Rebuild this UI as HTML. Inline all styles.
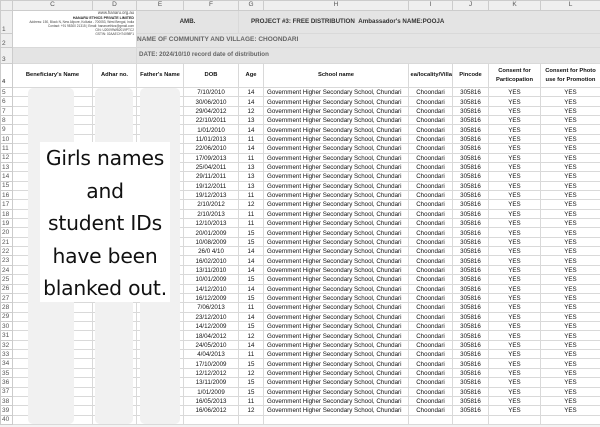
<!DOCTYPE html>
<html><head><meta charset="utf-8"><style>
*{margin:0;padding:0;box-sizing:border-box}
body{width:600px;height:427px;overflow:hidden;background:#f3f3f3;font-family:"Liberation Sans",Arial,sans-serif;position:relative}
table{position:absolute;left:0;top:0;border-collapse:collapse;table-layout:fixed;width:600px}
td{border:1px solid #d9d9d9;font-size:6.2px;color:#111;text-align:center;white-space:nowrap;overflow:hidden;padding:0;line-height:1;vertical-align:bottom}
tr.d td{height:9.37px;background:#fff}
td.n{background:#efefef;color:#555;text-align:left;padding-left:1px;font-size:6.5px;border-color:#ccc}
tr.h td{height:10px;background:#efefef;color:#555;font-size:6.5px;vertical-align:middle;border-color:#ccc}
td.g{background:#e4e4e4;font-weight:bold;color:#333}
td.s{text-align:left;padding-left:3px}
.hd td{font-weight:bold;font-size:5.8px;vertical-align:middle;background:#fff;line-height:1.5}
.blk{position:absolute;background:#f1f1f1;border-radius:5px;top:88px;height:336px}
.ov{position:absolute;left:40px;top:142px;width:130px;height:160px;background:#fff;font-family:"DejaVu Sans",sans-serif;font-size:20.3px;text-align:center;line-height:32.6px;color:#111;letter-spacing:-0.2px}
.logo{position:absolute;left:13px;top:11px;width:123px;height:23px;background:#fff;font-size:3.2px;text-align:right;line-height:3.9px;color:#444;padding-right:2px}
</style></head><body>
<table>
<colgroup><col style="width:12px"><col style="width:80px"><col style="width:44px"><col style="width:47px"><col style="width:55px"><col style="width:25px"><col style="width:145px"><col style="width:44px"><col style="width:36px"><col style="width:52px"><col style="width:60px"></colgroup>
<tr class="h"><td></td><td>C</td><td>D</td><td>E</td><td>F</td><td>G</td><td>H</td><td>I</td><td>J</td><td>K</td><td>L</td></tr>
<tr style="height:23px"><td class="n">1</td><td class="g" colspan="2" style="background:#fff"></td><td class="g" colspan="2" style="vertical-align:middle">AMB.</td><td class="g" colspan="6" style="text-align:left;vertical-align:middle;padding-left:12px">PROJECT #3: FREE DISTRIBUTION &nbsp;Ambassador's NAME:POOJA</td></tr>
<tr style="height:14px"><td class="n">2</td><td class="g" colspan="2" style="background:#fff"></td><td class="g" colspan="8" style="text-align:left;vertical-align:middle;font-size:6.5px;color:#666">NAME OF COMMUNITY AND VILLAGE: CHOONDARI</td></tr>
<tr style="height:16px"><td class="n">3</td><td class="g" colspan="2"></td><td class="g" colspan="8" style="text-align:left;vertical-align:middle;font-size:6.2px;color:#666;padding-left:2px">DATE: 2024/10/10 record date of distribution</td></tr>
<tr class="hd" style="height:24px"><td class="n" style="vertical-align:bottom">4</td><td>Beneficiary's Name</td><td>Adhar no.</td><td>Father's Name</td><td>DOB</td><td>Age</td><td>School name</td><td style="text-align:right">ea/locality/Villa</td><td>Pincode</td><td>Consent for<br>Particopation</td><td>Consent for Photo<br>use for Promotion</td></tr>
<tr class="d"><td class="n">5</td><td></td><td></td><td></td><td>7/10/2010</td><td>14</td><td class="s">Government Higher Secondary School, Chundari</td><td>Choondari</td><td>305816</td><td>YES</td><td>YES</td></tr>
<tr class="d"><td class="n">6</td><td></td><td></td><td></td><td>30/06/2010</td><td>14</td><td class="s">Government Higher Secondary School, Chundari</td><td>Choondari</td><td>305816</td><td>YES</td><td>YES</td></tr>
<tr class="d"><td class="n">7</td><td></td><td></td><td></td><td>29/04/2012</td><td>12</td><td class="s">Government Higher Secondary School, Chundari</td><td>Choondari</td><td>305816</td><td>YES</td><td>YES</td></tr>
<tr class="d"><td class="n">8</td><td></td><td></td><td></td><td>22/10/2011</td><td>13</td><td class="s">Government Higher Secondary School, Chundari</td><td>Choondari</td><td>305816</td><td>YES</td><td>YES</td></tr>
<tr class="d"><td class="n">9</td><td></td><td></td><td></td><td>1/01/2010</td><td>14</td><td class="s">Government Higher Secondary School, Chundari</td><td>Choondari</td><td>305816</td><td>YES</td><td>YES</td></tr>
<tr class="d"><td class="n">10</td><td></td><td></td><td></td><td>11/01/2013</td><td>11</td><td class="s">Government Higher Secondary School, Chundari</td><td>Choondari</td><td>305816</td><td>YES</td><td>YES</td></tr>
<tr class="d"><td class="n">11</td><td></td><td></td><td></td><td>22/06/2010</td><td>14</td><td class="s">Government Higher Secondary School, Chundari</td><td>Choondari</td><td>305816</td><td>YES</td><td>YES</td></tr>
<tr class="d"><td class="n">12</td><td></td><td></td><td></td><td>17/09/2013</td><td>11</td><td class="s">Government Higher Secondary School, Chundari</td><td>Choondari</td><td>305816</td><td>YES</td><td>YES</td></tr>
<tr class="d"><td class="n">13</td><td></td><td></td><td></td><td>25/04/2011</td><td>13</td><td class="s">Government Higher Secondary School, Chundari</td><td>Choondari</td><td>305816</td><td>YES</td><td>YES</td></tr>
<tr class="d"><td class="n">14</td><td></td><td></td><td></td><td>29/11/2011</td><td>13</td><td class="s">Government Higher Secondary School, Chundari</td><td>Choondari</td><td>305816</td><td>YES</td><td>YES</td></tr>
<tr class="d"><td class="n">15</td><td></td><td></td><td></td><td>19/12/2011</td><td>13</td><td class="s">Government Higher Secondary School, Chundari</td><td>Choondari</td><td>305816</td><td>YES</td><td>YES</td></tr>
<tr class="d"><td class="n">16</td><td></td><td></td><td></td><td>19/12/2013</td><td>11</td><td class="s">Government Higher Secondary School, Chundari</td><td>Choondari</td><td>305816</td><td>YES</td><td>YES</td></tr>
<tr class="d"><td class="n">17</td><td></td><td></td><td></td><td>2/10/2012</td><td>12</td><td class="s">Government Higher Secondary School, Chundari</td><td>Choondari</td><td>305816</td><td>YES</td><td>YES</td></tr>
<tr class="d"><td class="n">18</td><td></td><td></td><td></td><td>2/10/2013</td><td>11</td><td class="s">Government Higher Secondary School, Chundari</td><td>Choondari</td><td>305816</td><td>YES</td><td>YES</td></tr>
<tr class="d"><td class="n">19</td><td></td><td></td><td></td><td>12/10/2013</td><td>11</td><td class="s">Government Higher Secondary School, Chundari</td><td>Choondari</td><td>305816</td><td>YES</td><td>YES</td></tr>
<tr class="d"><td class="n">20</td><td></td><td></td><td></td><td>20/01/2009</td><td>15</td><td class="s">Government Higher Secondary School, Chundari</td><td>Choondari</td><td>305816</td><td>YES</td><td>YES</td></tr>
<tr class="d"><td class="n">21</td><td></td><td></td><td></td><td>10/08/2009</td><td>15</td><td class="s">Government Higher Secondary School, Chundari</td><td>Choondari</td><td>305816</td><td>YES</td><td>YES</td></tr>
<tr class="d"><td class="n">22</td><td></td><td></td><td></td><td>26/0 4/10</td><td>14</td><td class="s">Government Higher Secondary School, Chundari</td><td>Choondari</td><td>305816</td><td>YES</td><td>YES</td></tr>
<tr class="d"><td class="n">23</td><td></td><td></td><td></td><td>16/02/2010</td><td>14</td><td class="s">Government Higher Secondary School, Chundari</td><td>Choondari</td><td>305816</td><td>YES</td><td>YES</td></tr>
<tr class="d"><td class="n">24</td><td></td><td></td><td></td><td>13/11/2010</td><td>14</td><td class="s">Government Higher Secondary School, Chundari</td><td>Choondari</td><td>305816</td><td>YES</td><td>YES</td></tr>
<tr class="d"><td class="n">25</td><td></td><td></td><td></td><td>10/01/2009</td><td>15</td><td class="s">Government Higher Secondary School, Chundari</td><td>Choondari</td><td>305816</td><td>YES</td><td>YES</td></tr>
<tr class="d"><td class="n">26</td><td></td><td></td><td></td><td>14/12/2010</td><td>14</td><td class="s">Government Higher Secondary School, Chundari</td><td>Choondari</td><td>305816</td><td>YES</td><td>YES</td></tr>
<tr class="d"><td class="n">27</td><td></td><td></td><td></td><td>16/12/2009</td><td>15</td><td class="s">Government Higher Secondary School, Chundari</td><td>Choondari</td><td>305816</td><td>YES</td><td>YES</td></tr>
<tr class="d"><td class="n">28</td><td></td><td></td><td></td><td>7/06/2013</td><td>11</td><td class="s">Government Higher Secondary School, Chundari</td><td>Choondari</td><td>305816</td><td>YES</td><td>YES</td></tr>
<tr class="d"><td class="n">29</td><td></td><td></td><td></td><td>23/12/2010</td><td>14</td><td class="s">Government Higher Secondary School, Chundari</td><td>Choondari</td><td>305816</td><td>YES</td><td>YES</td></tr>
<tr class="d"><td class="n">30</td><td></td><td></td><td></td><td>14/12/2009</td><td>15</td><td class="s">Government Higher Secondary School, Chundari</td><td>Choondari</td><td>305816</td><td>YES</td><td>YES</td></tr>
<tr class="d"><td class="n">31</td><td></td><td></td><td></td><td>18/04/2012</td><td>12</td><td class="s">Government Higher Secondary School, Chundari</td><td>Choondari</td><td>305816</td><td>YES</td><td>YES</td></tr>
<tr class="d"><td class="n">32</td><td></td><td></td><td></td><td>24/05/2010</td><td>14</td><td class="s">Government Higher Secondary School, Chundari</td><td>Choondari</td><td>305816</td><td>YES</td><td>YES</td></tr>
<tr class="d"><td class="n">33</td><td></td><td></td><td></td><td>4/04/2013</td><td>11</td><td class="s">Government Higher Secondary School, Chundari</td><td>Choondari</td><td>305816</td><td>YES</td><td>YES</td></tr>
<tr class="d"><td class="n">34</td><td></td><td></td><td></td><td>17/10/2009</td><td>15</td><td class="s">Government Higher Secondary School, Chundari</td><td>Choondari</td><td>305816</td><td>YES</td><td>YES</td></tr>
<tr class="d"><td class="n">35</td><td></td><td></td><td></td><td>12/12/2012</td><td>12</td><td class="s">Government Higher Secondary School, Chundari</td><td>Choondari</td><td>305816</td><td>YES</td><td>YES</td></tr>
<tr class="d"><td class="n">36</td><td></td><td></td><td></td><td>13/11/2009</td><td>15</td><td class="s">Government Higher Secondary School, Chundari</td><td>Choondari</td><td>305816</td><td>YES</td><td>YES</td></tr>
<tr class="d"><td class="n">37</td><td></td><td></td><td></td><td>1/01/2009</td><td>15</td><td class="s">Government Higher Secondary School, Chundari</td><td>Choondari</td><td>305816</td><td>YES</td><td>YES</td></tr>
<tr class="d"><td class="n">38</td><td></td><td></td><td></td><td>16/05/2013</td><td>11</td><td class="s">Government Higher Secondary School, Chundari</td><td>Choondari</td><td>305816</td><td>YES</td><td>YES</td></tr>
<tr class="d"><td class="n">39</td><td></td><td></td><td></td><td>16/06/2012</td><td>12</td><td class="s">Government Higher Secondary School, Chundari</td><td>Choondari</td><td>305816</td><td>YES</td><td>YES</td></tr>
<tr class="d"><td class="n">40</td><td></td><td></td><td></td><td></td><td></td><td></td><td></td><td></td><td></td><td></td></tr>
</table>
<div class="logo"><div style="font-size:4.2px">www.hanaru.org.au</div><div style="font-weight:bold;font-size:3.6px;margin-top:2px;color:#222">HANARU ETHICS PRIVATE LIMITED</div><div>Address: 150, Block N, New Alipore, Kolkata - 700053, West Bengal, India</div><div>Contact: +91 98300 21315 | Email: hanaruethics@gmail.com</div><div>CIN: U20099WB2019PTC2</div><div>GSTIN: 02AAECH74098F1</div></div>
<div class="blk" style="left:28px;width:46px"></div>
<div class="blk" style="left:95px;width:38px"></div>
<div class="blk" style="left:140px;width:40px"></div>
<div class="ov">Girls names<br>and<br>student IDs<br>have been<br>blanked out.</div>
</body></html>
